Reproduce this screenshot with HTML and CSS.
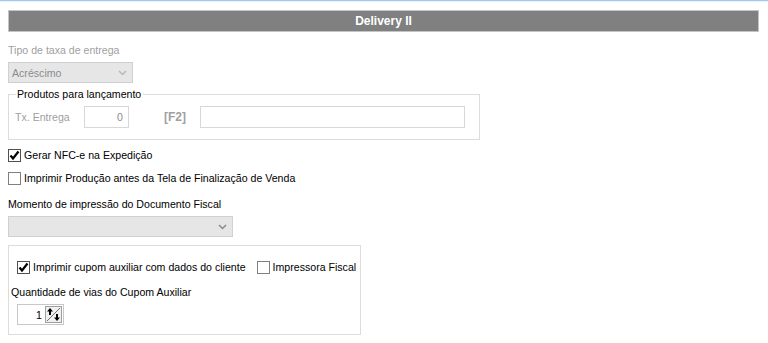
FILE: index.html
```html
<!DOCTYPE html>
<html lang="pt-BR">
<head>
    <meta charset="UTF-8">
    <title>Delivery II</title>
    <link rel="stylesheet" href="styles.css">
</head>
<body>
    <div class="topline"></div>
    <div class="page">
        <div class="title">Delivery II</div>

        <div class="label muted first">Tipo de taxa de entrega</div>
        <div class="select disabled tipo">
            <span>Acréscimo</span>
            <svg class="chev" width="9" height="6" viewBox="0 0 9 6"><path d="M1 1 L4.5 4.5 L8 1" fill="none" stroke="#b8b8b8" stroke-width="1.5"/></svg>
        </div>

        <fieldset class="group">
            <legend>Produtos para lançamento</legend>
            <div class="row">
                <span class="muted tx">Tx. Entrega</span>
                <div class="input num">0</div>
                <span class="f2">[F2]</span>
                <div class="input produto"></div>
            </div>
        </fieldset>

        <label class="check first-check"><span class="box checked"><svg width="11" height="11" viewBox="0 0 11 11"><path d="M1.5 5.5 L4 8.5 L9.5 1.5" fill="none" stroke="#000" stroke-width="2.2"/></svg></span>Gerar NFC-e na Expedição</label>
        <label class="check"><span class="box"></span>Imprimir Produção antes da Tela de Finalização de Venda</label>

        <div class="label momento">Momento de impressão do Documento Fiscal</div>
        <div class="select disabled doc">
            <span></span>
            <svg class="chev" width="9" height="6" viewBox="0 0 9 6"><path d="M1 1 L4.5 4.5 L8 1" fill="none" stroke="#8a8a8a" stroke-width="1.5"/></svg>
        </div>

        <div class="panel">
            <div class="checks">
                <label class="check"><span class="box checked"><svg width="11" height="11" viewBox="0 0 11 11"><path d="M1.5 5.5 L4 8.5 L9.5 1.5" fill="none" stroke="#000" stroke-width="2.2"/></svg></span>Imprimir cupom auxiliar com dados do cliente</label>
                <label class="check"><span class="box"></span>Impressora Fiscal</label>
            </div>
            <div class="label vias">Quantidade de vias do Cupom Auxiliar</div>
            <div class="spin">
                <span class="val">1</span>
                <svg class="arrows" width="17" height="17" viewBox="0 0 17 17">
                    <rect x="0.5" y="0.5" width="16" height="16" fill="#f0f0f0" stroke="#a0a0a0"/>
                    <path d="M2 15 L15 2" stroke="#707070" stroke-width="1"/>
                    <path d="M5 2 L2 5.5 H4 V9 H6 V5.5 H8 Z" fill="#000"/>
                    <path d="M12 15 L9 11.5 H11 V8 H13 V11.5 H15 Z" fill="#000"/>
                </svg>
            </div>
        </div>
    </div>
</body>
</html>
```

FILE: styles.css
```css
body {
    margin: 0;
    font-family: "Liberation Sans", Arial, sans-serif;
    font-size: 10.6px;
    color: #000;
    background: #fff;
}
.topline {
    height: 1px;
    background: #9cc8f3;
    border-bottom: 1px solid #eaf3fc;
}
.page {
    padding: 8px 8px 0 8px;
}
.title {
    height: 20px;
    line-height: 20px;
    margin-right: 1px;
    background: #808080;
    border: 1px solid #c4c4c4;
    color: #fff;
    font-weight: bold;
    font-size: 12px;
    text-align: center;
}
.label {
    line-height: 13px;
}
.muted {
    color: #a0a0a0;
}
.first {
    margin-top: 12px;
}
.select {
    display: flex;
    align-items: center;
    justify-content: space-between;
    box-sizing: border-box;
    height: 21px;
    padding: 0 5px 0 3px;
    border: 1px solid #d0d0d0;
    background: #e6e6e6;
}
.select.tipo {
    width: 125px;
    margin-top: 5px;
}
.select.doc {
    width: 225px;
    margin-top: 5px;
}
.select span {
    color: #8c8c8c;
}
.group {
    margin: 5px 0 0 0;
    padding: 5px 5px 11px 5px;
    width: 460px;
    border: 1px solid #dcdcdc;
}
.group legend {
    padding: 0 2px 0 1px;
    margin-left: 2px;
    line-height: 13px;
}
.row {
    display: flex;
    align-items: center;
}
.tx {
    width: 69px;
    padding-left: 1px;
}
.input {
    box-sizing: border-box;
    height: 22px;
    border: 1px solid #d8d8d8;
    background: #fff;
    line-height: 20px;
}
.input.num {
    width: 45px;
    text-align: right;
    padding-right: 5px;
    color: #8c8c8c;
}
.f2 {
    width: 36px;
    padding-left: 35px;
    color: #a0a0a0;
    font-weight: bold;
    font-size: 12px;
}
.input.produto {
    width: 265px;
}
.check {
    display: flex;
    align-items: center;
    line-height: 13px;
    white-space: nowrap;
}
.first-check {
    margin-top: 9px;
}
.check + .check {
    margin-top: 10px;
}
.box {
    box-sizing: border-box;
    width: 13px;
    height: 13px;
    margin-right: 3px;
    border: 1px solid #808080;
    background: #fff;
    display: flex;
    align-items: center;
    justify-content: center;
}
.box.checked {
    border-color: #505050;
}
.momento {
    margin-top: 13px;
}
.panel {
    box-sizing: border-box;
    width: 353px;
    height: 90px;
    margin-top: 8px;
    border: 1px solid #dcdcdc;
    padding: 15px 0 0 2px;
}
.checks {
    display: flex;
    padding-left: 6px;
}
.checks .check + .check {
    margin-top: 0;
    margin-left: 11px;
}
.vias {
    margin-top: 12px;
}
.spin {
    display: flex;
    align-items: center;
    box-sizing: border-box;
    width: 47px;
    height: 21px;
    margin: 5px 0 0 6px;
    border: 1px solid #c8c8c8;
    justify-content: flex-end;
    padding-right: 1px;
}
.spin .val {
    margin-right: 3px;
}
```
